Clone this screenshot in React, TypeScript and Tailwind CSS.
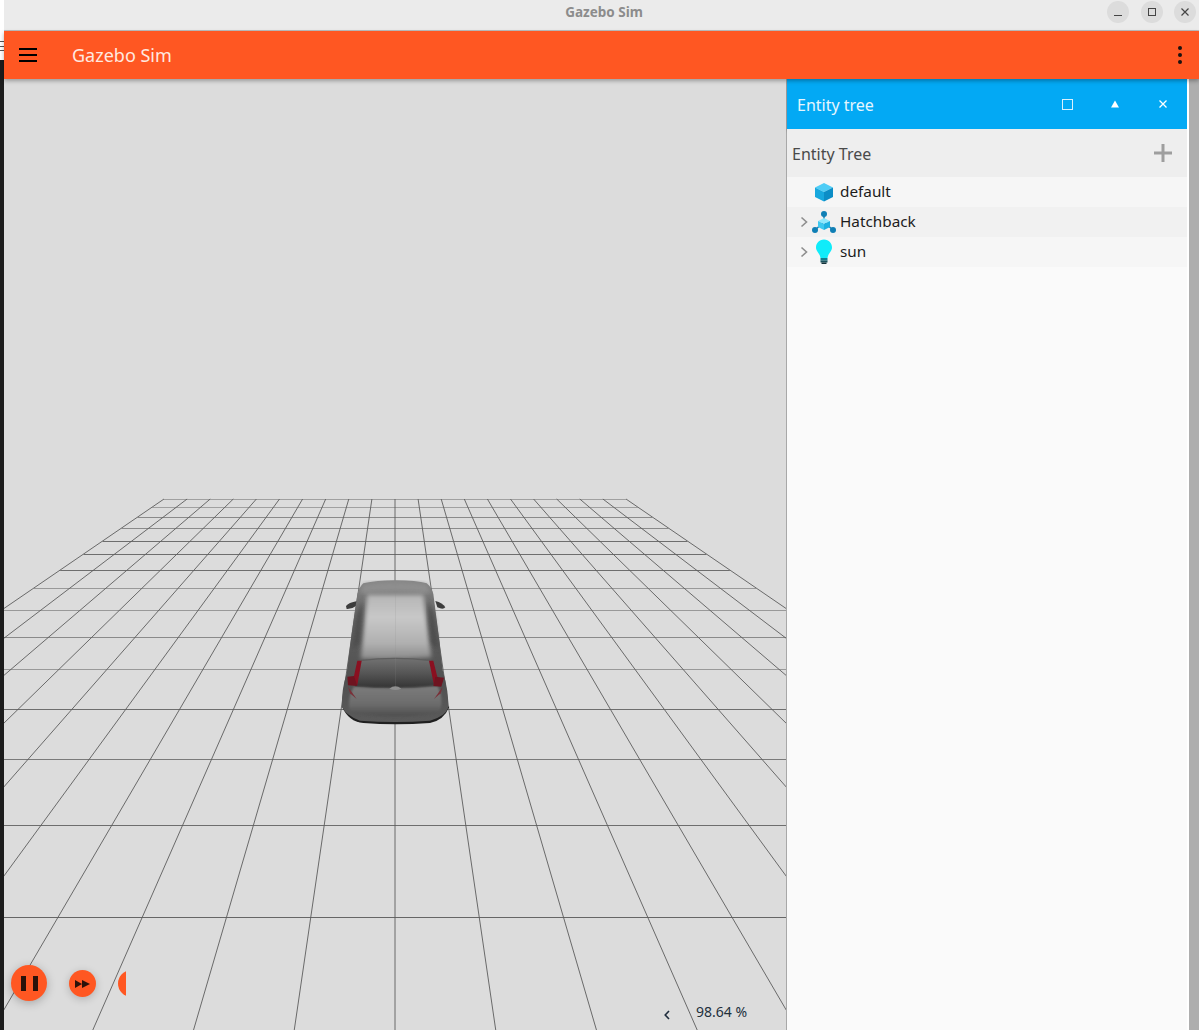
const HORIZONTALS: [number, string][] = [
  [499, "#a0a0a0"],
  [507, "#a0a0a0"],
  [517, "#8a8a8a"],
  [528, "#8a8a8a"],
  [541, "#6e6e6e"],
  [554, "#6e6e6e"],
  [570, "#6e6e6e"],
  [588, "#999999"],
  [610, "#999999"],
  [637, "#8a8a8a"],
  [669, "#999999"],
  [709, "#6e6e6e"],
  [759, "#7a7a7a"],
  [825, "#6e6e6e"],
  [917, "#666666"],
]
const VANISH_Y = 341
const CELL = 0.1462
const CENTER_X = 391 // scene coords, scene starts at x=4

function halfWidth(y: number) {
  return 10 * CELL * (y - VANISH_Y)
}

function Grid() {
  const top = 499
  const bottom = 1040
  const cols = Array.from({ length: 21 }, (_, i) => i - 10)
  return (
    <svg className="absolute inset-0" width="782" height="951" viewBox="0 79 782 951">
      {HORIZONTALS.map(([y, color]) => (
        <line
          key={y}
          x1={CENTER_X - halfWidth(y)}
          x2={CENTER_X + halfWidth(y)}
          y1={y + 0.5}
          y2={y + 0.5}
          stroke={color}
          strokeWidth="1"
        />
      ))}
      {cols.map((i) => (
        <line
          key={i}
          x1={CENTER_X + i * CELL * (top - VANISH_Y)}
          y1={top}
          x2={CENTER_X + i * CELL * (bottom - VANISH_Y)}
          y2={bottom}
          stroke="#5c5c5c"
          strokeWidth="0.9"
        />
      ))}
    </svg>
  )
}

// drawn in 3x coords so it can be compared with a zoomed crop
function Car() {
  return (
    <svg className="absolute left-[326px] top-[491px]" width="130" height="160" viewBox="0 0 390 480">
      <defs>
        <filter id="soft" x="-10%" y="-10%" width="120%" height="120%">
          <feGaussianBlur stdDeviation="6" />
        </filter>
        <filter id="softer" x="-20%" y="-20%" width="140%" height="140%">
          <feGaussianBlur stdDeviation="2.5" />
        </filter>
        <linearGradient id="roof" x1="0" y1="0" x2="0" y2="1">
          <stop offset="0" stopColor="#b5b5b5" />
          <stop offset="0.35" stopColor="#c8c8c8" />
          <stop offset="0.75" stopColor="#b0b0b0" />
          <stop offset="1" stopColor="#8a8a8a" />
        </linearGradient>
        <linearGradient id="body" x1="0" y1="0" x2="0" y2="1">
          <stop offset="0" stopColor="#858585" />
          <stop offset="0.3" stopColor="#606060" />
          <stop offset="0.7" stopColor="#505050" />
          <stop offset="1" stopColor="#5a5a5a" />
        </linearGradient>
        <linearGradient id="glass" x1="0" y1="0" x2="0" y2="1">
          <stop offset="0" stopColor="#727272" />
          <stop offset="0.5" stopColor="#555555" />
          <stop offset="1" stopColor="#333333" />
        </linearGradient>
        <linearGradient id="trunk" x1="0" y1="0" x2="0" y2="1">
          <stop offset="0" stopColor="#7c7c7c" />
          <stop offset="0.6" stopColor="#6c6c6c" />
          <stop offset="1" stopColor="#4e4e4e" />
        </linearGradient>
      </defs>
      {/* mirrors */}
      <path d="M48 108 Q55 98 82 93 L82 106 Q66 118 50 117 Z" fill="#3c3c3c" />
      <path d="M316 93 Q338 98 346 112 Q340 120 322 112 Z" fill="#3c3c3c" />
      {/* bottom edge */}
      <path d="M36 410 Q56 455 100 459 Q196 467 300 459 Q342 450 358 410 Z" fill="#202020" />
      {/* body */}
      <path
        d="M100 40 Q140 31 196 31 Q260 31 290 40 Q304 50 310 72 Q326 190 338 300 Q358 370 354 415 Q345 440 300 452 Q196 460 90 452 Q46 435 36 410 Q34 360 50 310 Q64 190 82 72 Q90 48 100 40 Z"
        fill="url(#body)"
      />
      {/* top rim */}
      <path d="M100 42 Q196 28 290 42 L302 70 Q196 60 90 70 Z" fill="#8e8e8e" filter="url(#soft)" />
      {/* roof */}
      <path d="M112 74 L280 74 Q292 170 304 262 Q196 272 92 266 Q102 170 112 74 Z" fill="url(#roof)" filter="url(#soft)" />
      {/* side window shading */}
      <path d="M82 130 L100 90 L88 220 L68 240 Z" fill="#4c4c4c" filter="url(#soft)" />
      <path d="M310 130 L292 90 L304 220 L326 240 Z" fill="#4c4c4c" filter="url(#soft)" />
      {/* rear glass */}
      <path d="M90 272 Q196 258 302 272 Q312 310 320 350 Q196 360 74 350 Q82 310 90 272 Z" fill="url(#glass)" />
      <path d="M90 272 Q196 258 302 272" fill="none" stroke="#5e5e5e" strokeWidth="4" />
      {/* trunk lid */}
      <path d="M72 350 Q196 360 322 348 Q345 390 326 430 Q196 448 62 430 Q48 390 72 350 Z" fill="url(#trunk)" filter="url(#softer)" />
      <path d="M178 356 Q196 342 214 356 Q196 364 178 356 Z" fill="#8f8f8f" />
      {/* tail lights */}
      <path d="M82 272 L95 272 L82 345 L66 345 Z" fill="#8a1020" />
      <path d="M297 272 L310 272 L328 345 L312 345 Z" fill="#8a1020" />
      <path d="M52 320 L72 318 L82 348 L54 346 Z" fill="#6e1420" />
      <path d="M316 320 L342 323 L334 350 L310 348 Z" fill="#6e1420" />
      <path d="M54 350 L80 387 L60 370 Z" fill="#7a3038" />
      <path d="M338 350 L312 387 L332 370 Z" fill="#7a3038" />
      <line x1="196" y1="32" x2="196" y2="350" stroke="#8a8a8a" strokeWidth="2" opacity="0.3" />
    </svg>
  )
}

function CubeIcon() {
  return (
    <svg width="20" height="20" viewBox="0 0 20 20">
      <path d="M10 1 L19 5.5 L10 10 L1 5.5 Z" fill="#4fcdf6" />
      <path d="M1 5.5 L10 10 L10 19.5 L1 15 Z" fill="#18a8de" />
      <path d="M19 5.5 L10 10 L10 19.5 L19 15 Z" fill="#0c8dc6" />
    </svg>
  )
}

function ModelIcon() {
  return (
    <svg width="26" height="24" viewBox="0 0 26 24">
      <path d="M13 4 L13 12 M4 20 L13 12 L22 20" stroke="#1f7fb0" strokeWidth="1.5" fill="none" />
      <circle cx="13" cy="4" r="3" fill="#0f7fb5" />
      <circle cx="4" cy="20" r="3" fill="#0f7fb5" />
      <circle cx="22" cy="20" r="3" fill="#0f7fb5" />
      <path d="M13 8 L19 11 L13 14 L7 11 Z" fill="#8fe8fc" />
      <path d="M7 11 L13 14 L13 20 L7 17 Z" fill="#3cc8f0" />
      <path d="M19 11 L13 14 L13 20 L19 17 Z" fill="#1cb0e0" />
    </svg>
  )
}

function BulbIcon() {
  return (
    <svg width="18" height="26" viewBox="0 0 18 26">
      <path d="M9 0.5 C14 0.5 17 4.5 17 8.5 C17 12.5 13 14.5 12.5 19 L5.5 19 C5 14.5 1 12.5 1 8.5 C1 4.5 4 0.5 9 0.5 Z" fill="#10ecfa" />
      <rect x="5.5" y="19" width="7" height="2.5" fill="#0f7f8f" />
      <rect x="5.5" y="21.5" width="7" height="2" fill="#17505c" />
      <rect x="6.5" y="23.5" width="5" height="1.5" fill="#12323a" />
    </svg>
  )
}

function Chevron() {
  return (
    <svg width="8" height="12" viewBox="0 0 8 12" fill="none" stroke="#8e8e8e" strokeWidth="1.6">
      <path d="M1.5 1.5 L6.5 6 L1.5 10.5" />
    </svg>
  )
}

function TreeRow({ label, icon, expandable, shaded }: { label: string; icon: React.ReactNode; expandable?: boolean; shaded?: boolean }) {
  return (
    <div className={`flex h-[30px] items-center ${shaded ? "bg-[#f1f1f1]" : "bg-[#f6f6f6]"}`}>
      <div className="flex w-[24px] justify-end pr-[3px]">{expandable && <Chevron />}</div>
      <div className="flex w-[26px] justify-center">{icon}</div>
      <span className="ml-[3px] pb-[2px] text-[15.3px] leading-[22px] text-[#1c1c1c]">{label}</span>
    </div>
  )
}

function WindowButton({ children }: { children: React.ReactNode }) {
  return <div className="flex h-[22px] w-[22px] items-center justify-center rounded-full bg-[#dcdcdc]">{children}</div>
}

export default function App() {
  return (
    <div className="flex h-[1030px] w-[1199px] overflow-hidden bg-white font-['Noto_Sans',sans-serif]">
      {/* desktop sliver behind the window */}
      <div className="flex w-[4px] shrink-0 flex-col bg-white">
        <div className="flex h-[60px] flex-col gap-[3.5px] pt-[41px]">
          <div className="h-px bg-[#555555]" />
          <div className="h-px bg-[#555555]" />
          <div className="h-px bg-[#555555]" />
        </div>
        <div className="flex-1 bg-[#1c1c1c]" />
      </div>

      <div className="flex min-w-0 flex-1 flex-col">
        {/* window title bar */}
        <div className="relative flex h-[31px] shrink-0 items-center justify-end gap-[11.5px] border-b border-[#bdbdbd] bg-[#ebebeb] pb-[6px] pr-[3px]">
          <span className="absolute left-0 right-0 top-[3px] pl-[5px] text-center text-[13.5px] font-bold leading-[18px] text-[#8c8c8c]">Gazebo Sim</span>
          <WindowButton>
            <svg width="10" height="10" viewBox="0 0 10 10"><path d="M1 8.5 H9" stroke="#444" strokeWidth="1" /></svg>
          </WindowButton>
          <WindowButton>
            <svg width="10" height="10" viewBox="0 0 10 10"><rect x="1.5" y="1.5" width="7" height="7" fill="none" stroke="#444" strokeWidth="1" /></svg>
          </WindowButton>
          <WindowButton>
            <svg width="10" height="10" viewBox="0 0 10 10"><path d="M1.5 1.5 L8.5 8.5 M8.5 1.5 L1.5 8.5" stroke="#444" strokeWidth="1.2" /></svg>
          </WindowButton>
        </div>

        {/* app bar */}
        <div className="relative z-10 flex h-[48px] shrink-0 items-center bg-[#ff5722] shadow-[0_2px_4px_rgba(0,0,0,0.3)]">
          <div className="ml-[15px] flex w-[18px] flex-col gap-[4px]">
            <div className="h-[2px] bg-black" />
            <div className="h-[2px] bg-black" />
            <div className="h-[2px] bg-black" />
          </div>
          <span className="ml-[35px] text-[18px] text-[#ffe9e0]">Gazebo Sim</span>
          <div className="ml-auto mr-[17px] flex flex-col gap-[3px]">
            <div className="h-[4px] w-[4px] rounded-full bg-[#1c1210]" />
            <div className="h-[4px] w-[4px] rounded-full bg-[#1c1210]" />
            <div className="h-[4px] w-[4px] rounded-full bg-[#1c1210]" />
          </div>
        </div>

        <div className="flex min-h-0 flex-1">
          {/* 3D scene */}
          <div className="relative w-[782px] shrink-0 overflow-hidden bg-[#dcdcdc]">
            <Grid />
            <Car />
            {/* play controls */}
            <div className="absolute bottom-0 left-0 h-[85px] w-[122px] overflow-hidden">
              <div className="absolute left-[7px] top-[20px] flex h-[36px] w-[36px] items-center justify-center gap-[7px] rounded-full bg-[#ff5722] shadow-[0_2px_10px_rgba(0,0,0,0.25)]">
                <div className="h-[15px] w-[5px] bg-[#2a120a]" />
                <div className="h-[15px] w-[5px] bg-[#2a120a]" />
              </div>
              <div className="absolute left-[65px] top-[25px] flex h-[27px] w-[27px] items-center justify-center rounded-full bg-[#ff5722] shadow-[0_2px_8px_rgba(0,0,0,0.2)]">
                <svg width="15" height="8" viewBox="0 0 15 8"><path d="M0 0 L7 4 L0 8 Z M7 0 L15 4 L7 8 Z" fill="#2a120a" /></svg>
              </div>
              <div className="absolute left-[114px] top-[25px] h-[27px] w-[27px] rounded-full bg-[#ff5722]" />
            </div>
            {/* real time factor */}
            <div className="absolute bottom-[8px] left-[660px] flex items-center">
              <svg className="mt-[5px]" width="6" height="10" viewBox="0 0 6 10" fill="none" stroke="#1f2d3d" strokeWidth="1.6"><path d="M5 1 L1.2 5 L5 9" /></svg>
              <span className="ml-[26px] text-[14px] leading-[20px] text-[#22303c]">98.64 %</span>
            </div>
          </div>

          {/* entity tree panel */}
          <div className="flex w-[401px] shrink-0 flex-col border-l border-[#a8a8a8] bg-[#fafafa]">
            <div className="flex h-[50px] shrink-0 items-center bg-[#03a9f4] pl-[10px] shadow-[0_2px_3px_rgba(0,0,0,0.25)]">
              <span className="pt-[2px] text-[16px] text-[#e6f6fe]">Entity tree</span>
              <div className="ml-auto flex items-center">
                <div className="flex w-[48px] justify-center">
                  <div className="h-[11px] w-[11px] border border-[#d8f0fd]" />
                </div>
                <div className="flex w-[48px] justify-center">
                  <svg width="8" height="8" viewBox="0 0 8 8"><path d="M4 0.5 L8 7.5 H0 Z" fill="white" /></svg>
                </div>
                <div className="flex w-[48px] justify-center">
                  <svg width="10" height="10" viewBox="0 0 10 10"><path d="M1.5 1.5 L8.5 8.5 M8.5 1.5 L1.5 8.5" stroke="white" strokeWidth="1.3" /></svg>
                </div>
              </div>
            </div>
            <div className="flex h-[48px] shrink-0 items-center justify-between bg-[#eeeeee] pl-[5px] pr-[15px]">
              <span className="pt-[2px] text-[16px] text-[#4a4a4a]">Entity Tree</span>
              <svg width="18" height="18" viewBox="0 0 18 18"><path d="M9 0 V18 M0 9 H18" stroke="#9e9e9e" strokeWidth="3" /></svg>
            </div>
            <TreeRow label="default" icon={<CubeIcon />} />
            <TreeRow label="Hatchback" icon={<ModelIcon />} expandable shaded />
            <TreeRow label="sun" icon={<BulbIcon />} expandable />
          </div>

          {/* right strip */}
          <div className="w-[2px] shrink-0 bg-white" />
          <div className="flex-1 bg-[#aeaeae]" />
        </div>
      </div>
    </div>
  )
}
